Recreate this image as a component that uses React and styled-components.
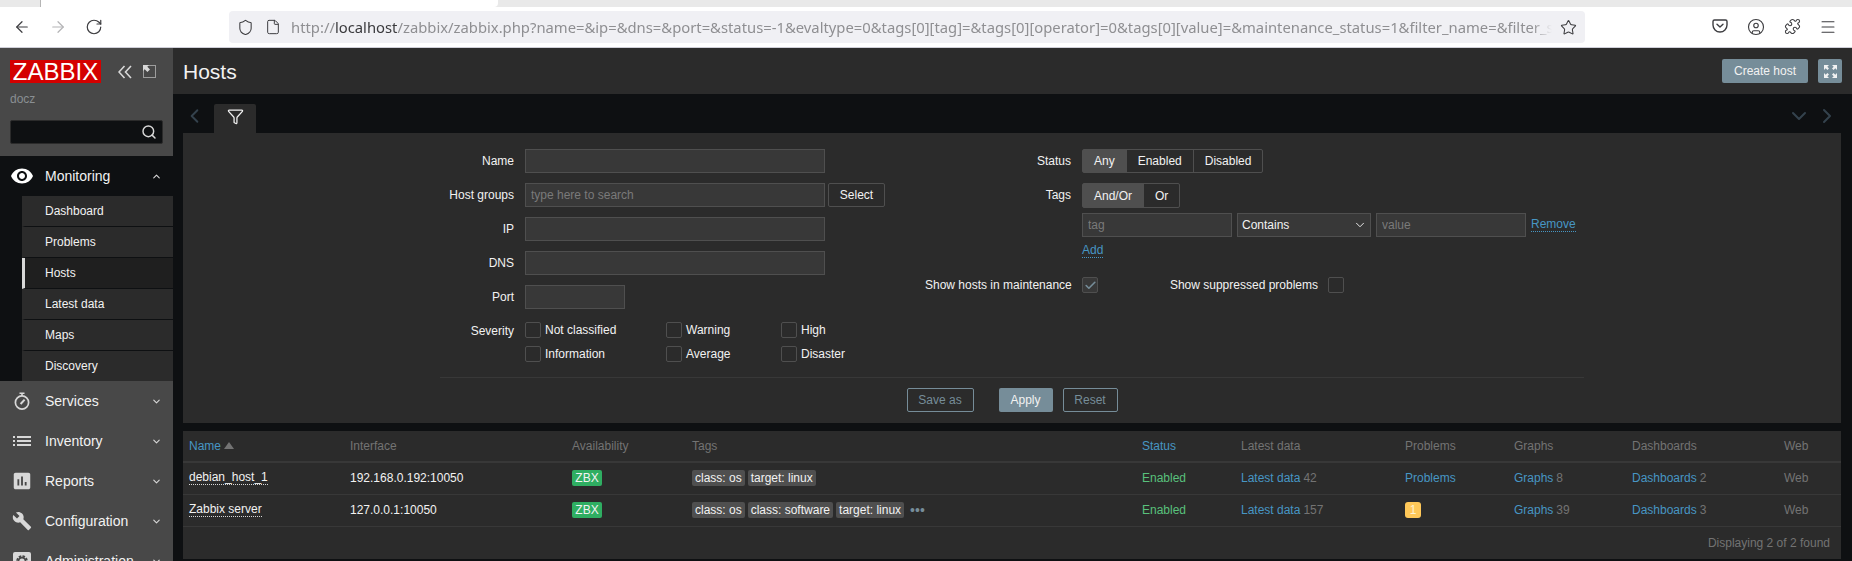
import React from "react";
import styled, { createGlobalStyle } from "styled-components";
import {
  ArrowLeft,
  ArrowRight,
  RotateCw,
  Shield,
  File,
  Star,
  CircleUser,
  Puzzle,
  Menu,
  Search,
  Filter,
  ChevronLeft,
  ChevronRight,
  ChevronDown,
  ChevronUp,
  Check,
} from "lucide-react";
import { MdVisibility, MdList, MdAssessment, MdBuild } from "react-icons/md";

const GlobalStyle = createGlobalStyle`
  html, body {
    margin: 0;
    height: 561px;
    overflow: hidden;
    background: #0e1012;
    font-family: "Liberation Sans", Arial, sans-serif;
    font-size: 12px;
    color: #f2f2f2;
  }
  * { box-sizing: border-box; }
`;

const URL_TEXT =
  "/zabbix/zabbix.php?name=&ip=&dns=&port=&status=-1&evaltype=0&tags[0][tag]=&tags[0][operator]=0&tags[0][value]=&maintenance_status=1&filter_name=&filter_status=-1&show_suppressed=0";

const Browser = styled.div`
  height: 48px;
  background: #fff;
  border-bottom: 1px solid #cfcfd8;
  display: flex;
  flex-direction: column;
`;
const TabStrip = styled.div`
  height: 7px;
  background: #e9e9e9;
  padding-left: 40px;
`;
const ActiveTab = styled.div`
  width: 458px;
  height: 7px;
  background: #fff;
  border-left: 1px solid #b5b5b5;
  border-bottom-right-radius: 4px;
`;
const BrowserBar = styled.div`
  flex: 1;
  display: flex;
  align-items: center;
  color: #3d3d40;
`;
const NavButtons = styled.div`
  width: 229px;
  padding-left: 13px;
  display: flex;
  gap: 18px;
`;
const NavIcon = styled.span`
  display: flex;
  color: ${(p) => (p.$off ? "#b4b4b6" : "#3d3d40")};
`;
const PageIcon = styled(NavIcon)`
  margin-left: 11px;
`;
const UrlBar = styled.div`
  width: 1356px;
  height: 32px;
  background: #f0f0f4;
  border-radius: 4px;
  display: flex;
  align-items: center;
  padding: 0 8px;
`;
const UrlText = styled.div`
  flex: 1;
  margin: 0 8px 0 10px;
  overflow: hidden;
  white-space: nowrap;
  font-family: "Noto Sans", sans-serif;
  font-size: 14.8px;
  color: #8f8f92;
  -webkit-mask-image: linear-gradient(to left, transparent, #000 20px);
  mask-image: linear-gradient(to left, transparent, #000 20px);
  b {
    font-weight: 400;
    color: #3a3a3d;
  }
`;
const ExtraIcons = styled.div`
  flex: 1;
  display: flex;
  justify-content: flex-end;
  padding-right: 6px;
`;
const ExtraIcon = styled.span`
  width: 36px;
  display: flex;
  justify-content: center;
  color: #3d3d40;
`;

const Page = styled.div`
  display: flex;
  height: 513px;
  overflow: hidden;
`;

const Sidebar = styled.aside`
  width: 173px;
  flex: none;
  background: #484848;
  overflow: hidden;
`;
const Brand = styled.div`
  height: 108px;
  padding: 12px 10px 0;
`;
const BrandTop = styled.div`
  display: flex;
  align-items: center;
  height: 23px;
  color: #d8d8d8;
`;
const Logo = styled.span`
  width: 91px;
  height: 23px;
  background: #d40000;
  color: #fff;
  font-size: 24px;
  line-height: 23px;
  text-align: center;
  margin-right: 17px;
`;
const CornerIcon = styled.span`
  display: flex;
  margin-left: 11px;
`;
const Instance = styled.div`
  color: #8a8f93;
  margin-top: 9px;
  height: 14px;
`;
const SearchBox = styled.div`
  margin-top: 14px;
  height: 24px;
  background: #0e1012;
  border: 1px solid #2b2b2b;
  border-radius: 2px;
  display: flex;
  align-items: center;
  justify-content: flex-end;
  padding-right: 5px;
  color: #d8d8d8;
`;
const MenuRow = styled.div`
  height: 40px;
  display: flex;
  align-items: center;
  background: ${(p) => (p.$open ? "#0e1012" : "transparent")};
  color: #f2f2f2;
  font-size: 14px;
`;
const MenuIcon = styled.span`
  width: 45px;
  display: flex;
  justify-content: center;
  padding-right: 1px;
  color: ${(p) => (p.$open ? "#fff" : "#d8d8d8")};
`;
const MenuLabel = styled.span`
  flex: 1;
`;
const MenuCaret = styled.span`
  width: 34px;
  display: flex;
  justify-content: center;
  color: #d8d8d8;
`;
const SubMenu = styled.div`
  background: #0e1012;
  padding-left: 22px;
  height: 185px;
  overflow: hidden;
`;
const SubItem = styled.div`
  height: 31px;
  line-height: 30px;
  background: ${(p) => (p.$active ? "#1f1f1f" : "#2b2b2b")};
  border-bottom: 1px solid #0e1012;
  border-left: 3px solid ${(p) => (p.$active ? "#d8d8d8" : "transparent")};
  padding-left: 20px;
  color: #f2f2f2;
`;

const Main = styled.main`
  flex: 1;
  min-width: 0;
`;
const Header = styled.header`
  height: 46px;
  background: #2b2b2b;
  display: flex;
  align-items: center;
  padding: 0 10px;
  gap: 10px;
`;
const Title = styled.h1`
  flex: 1;
  margin: 0;
  padding-top: 1px;
  font-size: 21px;
  font-weight: 400;
  color: #f2f2f2;
`;
const PrimaryButton = styled.button`
  height: 24px;
  padding: 0;
  background: #768d99;
  border: none;
  border-radius: 2px;
  color: #f2f2f2;
  font: inherit;
  white-space: nowrap;
  width: ${(p) => p.$w};
`;
const IconButton = styled(PrimaryButton)`
  width: 24px;
  display: flex;
  align-items: center;
  justify-content: center;
`;
const Content = styled.div`
  padding: 0 11px 0 10px;
`;
const TabBar = styled.div`
  height: 39px;
  padding-top: 10px;
  display: flex;
  align-items: flex-start;
  color: #34424d;
`;
const TabArrow = styled.span`
  display: flex;
  width: ${(p) => p.$w};
  height: 24px;
  padding-right: ${(p) => p.$pr || "0"};
  align-items: center;
  justify-content: center;
`;
const FilterTab = styled.div`
  width: 42px;
  height: 29px;
  background: #2b2b2b;
  color: #f2f2f2;
  display: flex;
  justify-content: center;
  padding-top: 4px;
  border-radius: 2px 2px 0 0;
`;
const TabSpacer = styled.div`
  flex: 1;
`;

const FilterPanel = styled.section`
  height: 290px;
  background: #2b2b2b;
  padding-top: 16px;
  display: flex;
  flex-direction: column;
`;
const FormColumns = styled.div`
  height: 228px;
  display: flex;
  padding-left: 257px;
`;
const FormColumn = styled.div`
  width: ${(p) => p.$w};
  display: flex;
  flex-direction: column;
`;
const Field = styled.div`
  display: grid;
  grid-template-columns: ${(p) => p.$label} 1fr;
  column-gap: 11px;
  margin-bottom: ${(p) => p.$mb || "10px"};
`;
const Label = styled.label`
  text-align: right;
  line-height: 24px;
  color: #f2f2f2;
  white-space: nowrap;
`;
const Controls = styled.div`
  display: flex;
  gap: 3px;
  align-items: center;
`;
const TextInput = styled.input`
  width: ${(p) => p.$w};
  height: 24px;
  padding: 0 5px;
  background: #383838;
  border: 1px solid #4f4f4f;
  color: #f2f2f2;
  font: inherit;
  outline: none;
  &::placeholder {
    color: #7a7a7a;
    opacity: 1;
  }
`;
const SelectButton = styled.button`
  width: 57px;
  height: 24px;
  background: #2b2b2b;
  border: 1px solid #4f4f4f;
  border-radius: 2px;
  color: #f2f2f2;
  font: inherit;
`;
const SeverityGrid = styled.div`
  display: grid;
  grid-template-columns: 141px 115px 100px;
  grid-auto-rows: 16px;
  row-gap: 8px;
  margin-top: 3px;
`;
const CheckLabel = styled.span`
  display: flex;
  align-items: center;
  gap: 4px;
  white-space: nowrap;
`;
const Box = styled.span`
  width: 16px;
  height: 16px;
  flex: none;
  display: flex;
  align-items: center;
  justify-content: center;
  background: ${(p) => (p.$checked ? "#383838" : "#2b2b2b")};
  border: 1px solid #4f4f4f;
  border-radius: 2px;
  color: #768d99;
`;
const Segments = styled.div`
  display: inline-flex;
  height: ${(p) => p.$h || "24px"};
  border: 1px solid #4f4f4f;
  border-radius: 2px;
`;
const Segment = styled.span`
  padding: 0 11px;
  display: flex;
  align-items: center;
  background: ${(p) => (p.$on ? "#4f4f4f" : "transparent")};
  border-right: 1px solid #4f4f4f;
  &:last-child {
    border-right: none;
  }
`;
const TagBlock = styled.div`
  display: flex;
  flex-direction: column;
  align-items: flex-start;
`;
const TagRow = styled.div`
  display: flex;
  align-items: center;
  gap: 5px;
  margin-top: 5px;
`;
const FakeSelect = styled.div`
  position: relative;
  width: 134px;
  height: 24px;
  line-height: 22px;
  padding-left: 4px;
  background: #383838;
  border: 1px solid #4f4f4f;
  svg {
    position: absolute;
    right: 3px;
    top: 4px;
  }
`;
const TextLink = styled.span`
  color: #4796c4;
  border-bottom: 1px dotted #4796c4;
  line-height: 13px;
`;
const AddLink = styled(TextLink)`
  margin-top: 7px;
`;
const ShowRow = styled.div`
  display: flex;
  align-items: center;
  height: 16px;
  margin-top: 19px;
`;
const ShowLabel = styled.span`
  width: ${(p) => p.$w};
  text-align: right;
  margin-right: ${(p) => p.$mr || "10px"};
  white-space: nowrap;
`;
const FormFooter = styled.div`
  margin: 0 257px;
  border-top: 1px solid #383838;
  padding-top: 10px;
  display: flex;
  justify-content: center;
  gap: 10px;
`;
const GhostButton = styled.button`
  height: 24px;
  width: ${(p) => p.$w};
  margin-right: ${(p) => p.$mr || "0"};
  background: transparent;
  border: 1px solid #768d99;
  border-radius: 2px;
  color: #768d99;
  font: inherit;
  padding: 0;
`;

const HostTable = styled.section`
  margin-top: 8px;
  height: 128px;
  background: #2b2b2b;
`;
const Row = styled.div`
  display: grid;
  grid-template-columns: 161px 222px 120px 450px 99px 164px 109px 118px 152px 63px;
  height: 32px;
  border-bottom: ${(p) => (p.$head ? "2px solid #383838" : "1px solid #383838")};
`;
const Cell = styled.div`
  padding: 0 0 1px 6px;
  display: flex;
  align-items: center;
  gap: ${(p) => p.$gap || "3px"};
  white-space: nowrap;
  color: ${(p) => p.$color || "#f2f2f2"};
`;
const HeadText = styled.span`
  color: ${(p) => (p.$link ? "#4796c4" : "#737373")};
`;
const SortMark = styled.span`
  width: 0;
  height: 0;
  border-left: 5px solid transparent;
  border-right: 5px solid transparent;
  border-bottom: 7px solid #737373;
  margin-left: 1px;
`;
const HostName = styled.span`
  border-bottom: 1px dotted #d8d8d8;
  line-height: 13px;
`;
const Chip = styled.span`
  width: 30px;
  height: 16px;
  line-height: 16px;
  text-align: center;
  background: #2fae62;
  color: #f2f2f2;
  border-radius: 2px;
`;
const Tag = styled.span`
  height: 16px;
  line-height: 16px;
  padding: 0 3px;
  background: #4f4f4f;
  color: #f2f2f2;
  border-radius: 2px;
`;
const MoreDots = styled.span`
  color: #768d99;
  font-size: 14px;
  margin-left: 3px;
`;
const Link = styled.span`
  color: #4796c4;
`;
const Count = styled.span`
  color: #737373;
`;
const ProblemCount = styled.span`
  width: 16px;
  height: 16px;
  background: #ffc859;
  color: #fff3d0;
  border-radius: 3px;
  text-align: center;
  line-height: 16px;
`;
const TableFooter = styled.div`
  height: 32px;
  display: flex;
  align-items: center;
  justify-content: flex-end;
  padding-right: 11px;
  color: #737373;
`;

function PocketIcon() {
  return (
    <svg width="16" height="16" viewBox="0 0 16 16" fill="none" stroke="currentColor" strokeWidth="1.4">
      <path d="M2.5 2h11A1.5 1.5 0 0 1 15 3.5V7a7 7 0 0 1-14 0V3.5A1.5 1.5 0 0 1 2.5 2z" />
      <path d="M5 6.2 8 9l3-2.8" strokeLinecap="round" strokeLinejoin="round" />
    </svg>
  );
}

function ExpandIcon() {
  return (
    <svg width="15" height="15" viewBox="0 0 15 15" fill="#f2f2f2">
      <path d="M1 1h5L4.3 2.7 6 4.4 4.4 6 2.7 4.3 1 6zM14 1v5l-1.7-1.7L10.6 6 9 4.4l1.7-1.7L9 1zM1 14V9l1.7 1.7L4.4 9 6 10.6l-1.7 1.7L6 14zM14 14H9l1.7-1.7L9 10.6 10.6 9l1.7 1.7L14 9z" />
    </svg>
  );
}

function DoubleLeftIcon() {
  return (
    <svg width="14" height="14" viewBox="0 0 14 14" fill="none" stroke="currentColor" strokeWidth="1.6">
      <path d="M6.5 1 1 7l5.5 6M13 1 7.5 7l5.5 6" />
    </svg>
  );
}

function KioskIcon() {
  return (
    <svg width="13" height="13" viewBox="0 0 13 13">
      <rect x="0.5" y="0.5" width="12" height="12" fill="none" stroke="#f2f2f2" strokeDasharray="1 1" />
      <path d="M0 0h6L4.3 1.7 7 4.4 4.4 7 1.7 4.3 0 6z" fill="#d8d8d8" />
    </svg>
  );
}

function StopwatchIcon() {
  return (
    <svg width="18" height="18" viewBox="0 0 18 18" fill="none" stroke="#d8d8d8">
      <circle cx="9" cy="10.5" r="6.6" strokeWidth="1.7" />
      <path d="M6.5 1.2h5M9 1.2v2.6" strokeWidth="1.6" />
      <path d="M7.6 12 11.6 7.6" strokeWidth="2" />
    </svg>
  );
}

function AdminIcon() {
  return (
    <svg width="18" height="18" viewBox="0 0 18 18">
      <rect width="18" height="18" rx="2" fill="#d8d8d8" />
      <circle cx="9" cy="9" r="4.6" fill="none" stroke="#484848" strokeWidth="2.4" strokeDasharray="2.4 1.2" />
      <circle cx="9" cy="9" r="3.4" fill="none" stroke="#484848" strokeWidth="1.6" />
    </svg>
  );
}

const subItems = ["Dashboard", "Problems", "Hosts", "Latest data", "Maps", "Discovery"];
const closedMenus = [
  { label: "Services", icon: <StopwatchIcon /> },
  { label: "Inventory", icon: <MdList size={24} /> },
  { label: "Reports", icon: <MdAssessment size={22} /> },
  { label: "Configuration", icon: <MdBuild size={20} /> },
  { label: "Administration", icon: <AdminIcon /> },
];

const hosts = [
  {
    name: "debian_host_1",
    iface: "192.168.0.192:10050",
    tags: ["class: os", "target: linux"],
    latest: 42,
    problems: null,
    graphs: 8,
    dashboards: 2,
  },
  {
    name: "Zabbix server",
    iface: "127.0.0.1:10050",
    tags: ["class: os", "class: software", "target: linux"],
    more: true,
    latest: 157,
    problems: 1,
    graphs: 39,
    dashboards: 3,
  },
];

const columns = [
  ["Name", true],
  ["Interface"],
  ["Availability"],
  ["Tags"],
  ["Status", true],
  ["Latest data"],
  ["Problems"],
  ["Graphs"],
  ["Dashboards"],
  ["Web"],
];

const severities = ["Not classified", "Warning", "High", "Information", "Average", "Disaster"];

export default function App() {
  return (
    <>
      <GlobalStyle />
      <Browser>
        <TabStrip>
          <ActiveTab />
        </TabStrip>
        <BrowserBar>
          <NavButtons>
            <NavIcon><ArrowLeft size={18} strokeWidth={1.6} /></NavIcon>
            <NavIcon $off><ArrowRight size={18} strokeWidth={1.6} /></NavIcon>
            <NavIcon><RotateCw size={18} strokeWidth={1.6} /></NavIcon>
          </NavButtons>
          <UrlBar>
            <NavIcon><Shield size={17} strokeWidth={1.5} /></NavIcon>
            <PageIcon><File size={16} strokeWidth={1.5} /></PageIcon>
            <UrlText>
              http://<b>localhost</b>
              {URL_TEXT}
            </UrlText>
            <NavIcon><Star size={17} strokeWidth={1.5} /></NavIcon>
          </UrlBar>
          <ExtraIcons>
            <ExtraIcon><PocketIcon /></ExtraIcon>
            <ExtraIcon><CircleUser size={18} strokeWidth={1.5} /></ExtraIcon>
            <ExtraIcon><Puzzle size={17} strokeWidth={1.5} /></ExtraIcon>
            <ExtraIcon><Menu size={18} strokeWidth={1.4} /></ExtraIcon>
          </ExtraIcons>
        </BrowserBar>
      </Browser>

      <Page>
        <Sidebar>
          <Brand>
            <BrandTop>
              <Logo>ZABBIX</Logo>
              <DoubleLeftIcon />
              <CornerIcon><KioskIcon /></CornerIcon>
            </BrandTop>
            <Instance>docz</Instance>
            <SearchBox>
              <Search size={16} strokeWidth={2.2} />
            </SearchBox>
          </Brand>

          <MenuRow $open>
            <MenuIcon $open><MdVisibility size={24} /></MenuIcon>
            <MenuLabel>Monitoring</MenuLabel>
            <MenuCaret><ChevronUp size={11} strokeWidth={2.4} /></MenuCaret>
          </MenuRow>
          <SubMenu>
            {subItems.map((item) => (
              <SubItem key={item} $active={item === "Hosts"}>{item}</SubItem>
            ))}
          </SubMenu>
          {closedMenus.map((m) => (
            <MenuRow key={m.label}>
              <MenuIcon>{m.icon}</MenuIcon>
              <MenuLabel>{m.label}</MenuLabel>
              <MenuCaret><ChevronDown size={11} strokeWidth={2.4} /></MenuCaret>
            </MenuRow>
          ))}
        </Sidebar>

        <Main>
          <Header>
            <Title>Hosts</Title>
            <PrimaryButton $w="86px">Create host</PrimaryButton>
            <IconButton><ExpandIcon /></IconButton>
          </Header>
          <Content>
            <TabBar>
              <TabArrow $w="31px" $pr="8px"><ChevronLeft size={24} strokeWidth={2} /></TabArrow>
              <FilterTab><Filter size={17} strokeWidth={1.8} /></FilterTab>
              <TabSpacer />
              <TabArrow $w="28px"><ChevronDown size={24} strokeWidth={2} /></TabArrow>
              <TabArrow $w="28px"><ChevronRight size={24} strokeWidth={2} /></TabArrow>
            </TabBar>

            <FilterPanel>
              <FormColumns>
                <FormColumn $w="485px">
                  <Field $label="74px"><Label>Name</Label><Controls><TextInput $w="300px" /></Controls></Field>
                  <Field $label="74px">
                    <Label>Host groups</Label>
                    <Controls>
                      <TextInput $w="300px" placeholder="type here to search" />
                      <SelectButton>Select</SelectButton>
                    </Controls>
                  </Field>
                  <Field $label="74px"><Label>IP</Label><Controls><TextInput $w="300px" /></Controls></Field>
                  <Field $label="74px"><Label>DNS</Label><Controls><TextInput $w="300px" /></Controls></Field>
                  <Field $label="74px"><Label>Port</Label><Controls><TextInput $w="100px" /></Controls></Field>
                  <Field $label="74px">
                    <Label>Severity</Label>
                    <SeverityGrid>
                      {severities.map((s) => (
                        <CheckLabel key={s}><Box /><span>{s}</span></CheckLabel>
                      ))}
                    </SeverityGrid>
                  </Field>
                </FormColumn>

                <FormColumn $w="700px">
                  <Field $label="146px">
                    <Label>Status</Label>
                    <Controls>
                      <Segments>
                        <Segment $on>Any</Segment>
                        <Segment>Enabled</Segment>
                        <Segment>Disabled</Segment>
                      </Segments>
                    </Controls>
                  </Field>
                  <Field $label="146px" $mb="0">
                    <Label>Tags</Label>
                    <TagBlock>
                      <Segments $h="25px">
                        <Segment $on>And/Or</Segment>
                        <Segment>Or</Segment>
                      </Segments>
                      <TagRow>
                        <TextInput $w="150px" placeholder="tag" />
                        <FakeSelect>Contains<ChevronDown size={14} strokeWidth={1.6} /></FakeSelect>
                        <TextInput $w="150px" placeholder="value" />
                        <TextLink>Remove</TextLink>
                      </TagRow>
                      <AddLink>Add</AddLink>
                    </TagBlock>
                  </Field>
                  <ShowRow>
                    <ShowLabel $w="146px" $mr="11px">Show hosts in maintenance</ShowLabel>
                    <Box $checked><Check size={13} strokeWidth={3} /></Box>
                    <ShowLabel $w="220px">Show suppressed problems</ShowLabel>
                    <Box />
                  </ShowRow>
                </FormColumn>
              </FormColumns>
              <FormFooter>
                <GhostButton $w="67px" $mr="15px">Save as</GhostButton>
                <PrimaryButton $w="54px">Apply</PrimaryButton>
                <GhostButton $w="55px">Reset</GhostButton>
              </FormFooter>
            </FilterPanel>

            <HostTable>
              <Row $head>
                {columns.map(([title, link]) => (
                  <Cell key={title} $gap="2px">
                    <HeadText $link={link}>{title}</HeadText>
                    {title === "Name" && <SortMark />}
                  </Cell>
                ))}
              </Row>
              {hosts.map((h) => (
                <Row key={h.name}>
                  <Cell><HostName>{h.name}</HostName></Cell>
                  <Cell>{h.iface}</Cell>
                  <Cell><Chip>ZBX</Chip></Cell>
                  <Cell>
                    {h.tags.map((t) => <Tag key={t}>{t}</Tag>)}
                    {h.more && <MoreDots>•••</MoreDots>}
                  </Cell>
                  <Cell $color="#59c17c">Enabled</Cell>
                  <Cell><Link>Latest data</Link><Count>{h.latest}</Count></Cell>
                  <Cell>
                    {h.problems ? <ProblemCount>{h.problems}</ProblemCount> : <Link>Problems</Link>}
                  </Cell>
                  <Cell><Link>Graphs</Link><Count>{h.graphs}</Count></Cell>
                  <Cell><Link>Dashboards</Link><Count>{h.dashboards}</Count></Cell>
                  <Cell $color="#737373">Web</Cell>
                </Row>
              ))}
              <TableFooter>Displaying 2 of 2 found</TableFooter>
            </HostTable>
          </Content>
        </Main>
      </Page>
    </>
  );
}
